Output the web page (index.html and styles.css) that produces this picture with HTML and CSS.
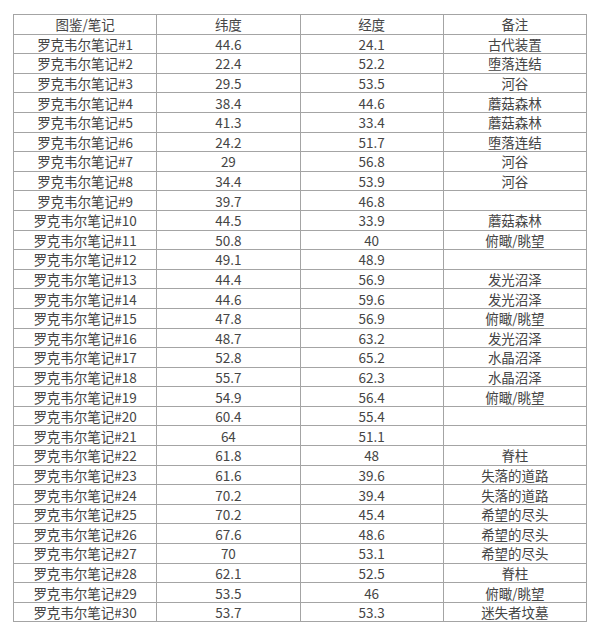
FILE: index.html
```html
<!DOCTYPE html>
<html lang="zh">
<head>
<meta charset="utf-8">
<link rel="stylesheet" href="styles.css">
</head>
<body>
<table class="notes">
<thead>
<tr><th>图鉴/笔记</th><th>纬度</th><th>经度</th><th>备注</th></tr>
</thead>
<tbody>
<tr><td>罗克韦尔笔记#1</td><td>44.6</td><td>24.1</td><td>古代装置</td></tr>
<tr><td>罗克韦尔笔记#2</td><td>22.4</td><td>52.2</td><td>堕落连结</td></tr>
<tr><td>罗克韦尔笔记#3</td><td>29.5</td><td>53.5</td><td>河谷</td></tr>
<tr><td>罗克韦尔笔记#4</td><td>38.4</td><td>44.6</td><td>蘑菇森林</td></tr>
<tr><td>罗克韦尔笔记#5</td><td>41.3</td><td>33.4</td><td>蘑菇森林</td></tr>
<tr><td>罗克韦尔笔记#6</td><td>24.2</td><td>51.7</td><td>堕落连结</td></tr>
<tr><td>罗克韦尔笔记#7</td><td>29</td><td>56.8</td><td>河谷</td></tr>
<tr><td>罗克韦尔笔记#8</td><td>34.4</td><td>53.9</td><td>河谷</td></tr>
<tr><td>罗克韦尔笔记#9</td><td>39.7</td><td>46.8</td><td></td></tr>
<tr><td>罗克韦尔笔记#10</td><td>44.5</td><td>33.9</td><td>蘑菇森林</td></tr>
<tr><td>罗克韦尔笔记#11</td><td>50.8</td><td>40</td><td>俯瞰/眺望</td></tr>
<tr><td>罗克韦尔笔记#12</td><td>49.1</td><td>48.9</td><td></td></tr>
<tr><td>罗克韦尔笔记#13</td><td>44.4</td><td>56.9</td><td>发光沼泽</td></tr>
<tr><td>罗克韦尔笔记#14</td><td>44.6</td><td>59.6</td><td>发光沼泽</td></tr>
<tr><td>罗克韦尔笔记#15</td><td>47.8</td><td>56.9</td><td>俯瞰/眺望</td></tr>
<tr><td>罗克韦尔笔记#16</td><td>48.7</td><td>63.2</td><td>发光沼泽</td></tr>
<tr><td>罗克韦尔笔记#17</td><td>52.8</td><td>65.2</td><td>水晶沼泽</td></tr>
<tr><td>罗克韦尔笔记#18</td><td>55.7</td><td>62.3</td><td>水晶沼泽</td></tr>
<tr><td>罗克韦尔笔记#19</td><td>54.9</td><td>56.4</td><td>俯瞰/眺望</td></tr>
<tr><td>罗克韦尔笔记#20</td><td>60.4</td><td>55.4</td><td></td></tr>
<tr><td>罗克韦尔笔记#21</td><td>64</td><td>51.1</td><td></td></tr>
<tr><td>罗克韦尔笔记#22</td><td>61.8</td><td>48</td><td>脊柱</td></tr>
<tr><td>罗克韦尔笔记#23</td><td>61.6</td><td>39.6</td><td>失落的道路</td></tr>
<tr><td>罗克韦尔笔记#24</td><td>70.2</td><td>39.4</td><td>失落的道路</td></tr>
<tr><td>罗克韦尔笔记#25</td><td>70.2</td><td>45.4</td><td>希望的尽头</td></tr>
<tr><td>罗克韦尔笔记#26</td><td>67.6</td><td>48.6</td><td>希望的尽头</td></tr>
<tr><td>罗克韦尔笔记#27</td><td>70</td><td>53.1</td><td>希望的尽头</td></tr>
<tr><td>罗克韦尔笔记#28</td><td>62.1</td><td>52.5</td><td>脊柱</td></tr>
<tr><td>罗克韦尔笔记#29</td><td>53.5</td><td>46</td><td>俯瞰/眺望</td></tr>
<tr><td>罗克韦尔笔记#30</td><td>53.7</td><td>53.3</td><td>迷失者坟墓</td></tr>
</tbody>
</table>
</body>
</html>
```
FILE: styles.css
```css
html, body {
  margin: 0;
  padding: 0;
  background: #ffffff;
}
body {
  padding: 14px 13px 0 13px;
  font-family: "Noto Sans CJK SC", "Noto Sans", sans-serif;
  font-size: 13.5px;
  color: #454545;
}
.notes {
  border-collapse: collapse;
  width: 574px;
  table-layout: fixed;
}
.notes th, .notes td {
  border: 1px solid #a4a4a4;
  text-align: center;
  font-weight: normal;
  padding: 0;
  height: 18.6px;
  line-height: 18px;
  white-space: nowrap;
}
```
